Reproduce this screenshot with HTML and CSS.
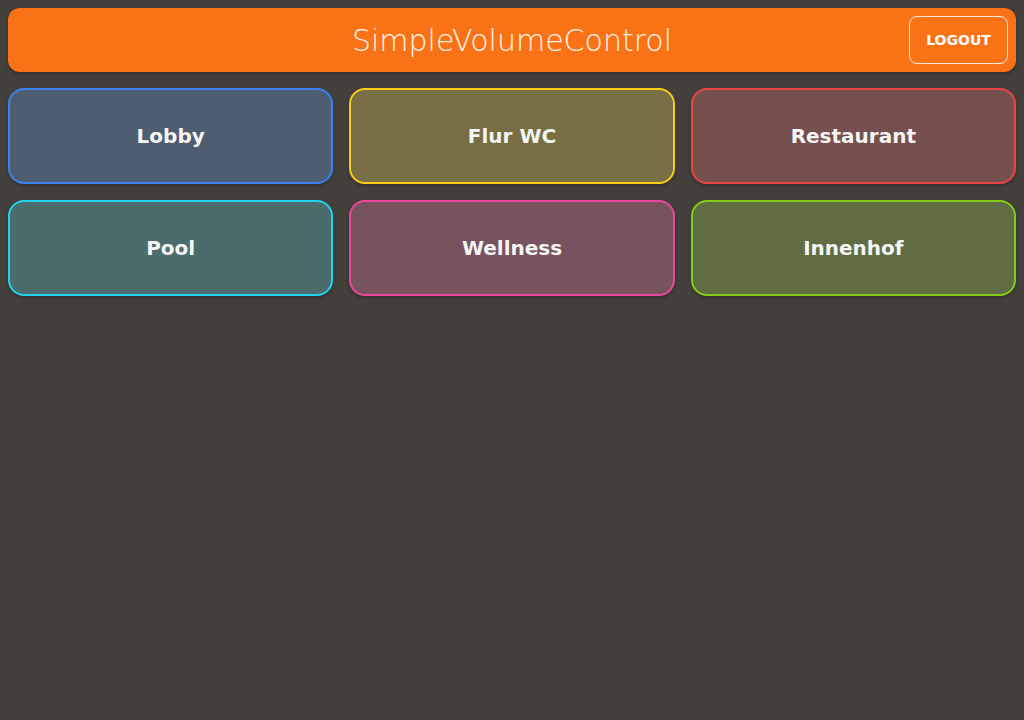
FILE: index.html
```html
<!DOCTYPE html>
<html lang="de">
<head>
<meta charset="utf-8">
<title>SimpleVolumeControl</title>
<link rel="stylesheet" href="styles.css">
</head>
<body>
<header class="topbar">
  <h1 class="title">SimpleVolumeControl</h1>
  <button class="logout">LOGOUT</button>
</header>
<main class="grid">
  <button class="tile tile-blue">Lobby</button>
  <button class="tile tile-yellow">Flur WC</button>
  <button class="tile tile-red">Restaurant</button>
  <button class="tile tile-cyan">Pool</button>
  <button class="tile tile-pink">Wellness</button>
  <button class="tile tile-lime">Innenhof</button>
</main>
</body>
</html>
```

FILE: styles.css
```css
html, body {
  margin: 0;
  padding: 0;
}
body {
  background: #44403c;
  padding: 8px;
  font-family: "DejaVu Sans", sans-serif;
  color: #fff;
  min-height: 720px;
  box-sizing: border-box;
}
.topbar {
  position: relative;
  height: 64px;
  background: #f97316;
  border-radius: 12px;
  display: flex;
  align-items: center;
  justify-content: center;
  box-shadow: 0 2px 4px rgba(0,0,0,0.25);
}
.title {
  margin: 0;
  font-size: 30px;
  font-weight: 200;
  color: #fff4ea;
  letter-spacing: 0;
}
.logout {
  position: absolute;
  right: 8px;
  top: 8px;
  width: 99px;
  height: 48px;
  background: transparent;
  border: 1px solid rgba(255,255,255,0.85);
  border-radius: 8px;
  color: #fff;
  font-family: "DejaVu Sans", sans-serif;
  font-weight: bold;
  font-size: 14px;
  padding: 0;
}
.grid {
  margin-top: 16px;
  display: grid;
  grid-template-columns: repeat(3, 1fr);
  gap: 16px;
}
.tile {
  height: 96px;
  border: 2px solid;
  border-radius: 16px;
  color: #f5f5f4;
  font-family: "DejaVu Sans", sans-serif;
  font-weight: bold;
  font-size: 20px;
  box-shadow: 0 2px 4px rgba(0,0,0,0.25);
  padding: 0;
}
.tile-blue { background: #4f5d70; border-color: #3b82f6; }
.tile-yellow { background: #786e43; border-color: #facc15; }
.tile-red { background: #76504e; border-color: #ef4444; }
.tile-cyan { background: #4a6c6c; border-color: #22d3ee; }
.tile-pink { background: #77525f; border-color: #ec4899; }
.tile-lime { background: #606d43; border-color: #84cc16; }
```
